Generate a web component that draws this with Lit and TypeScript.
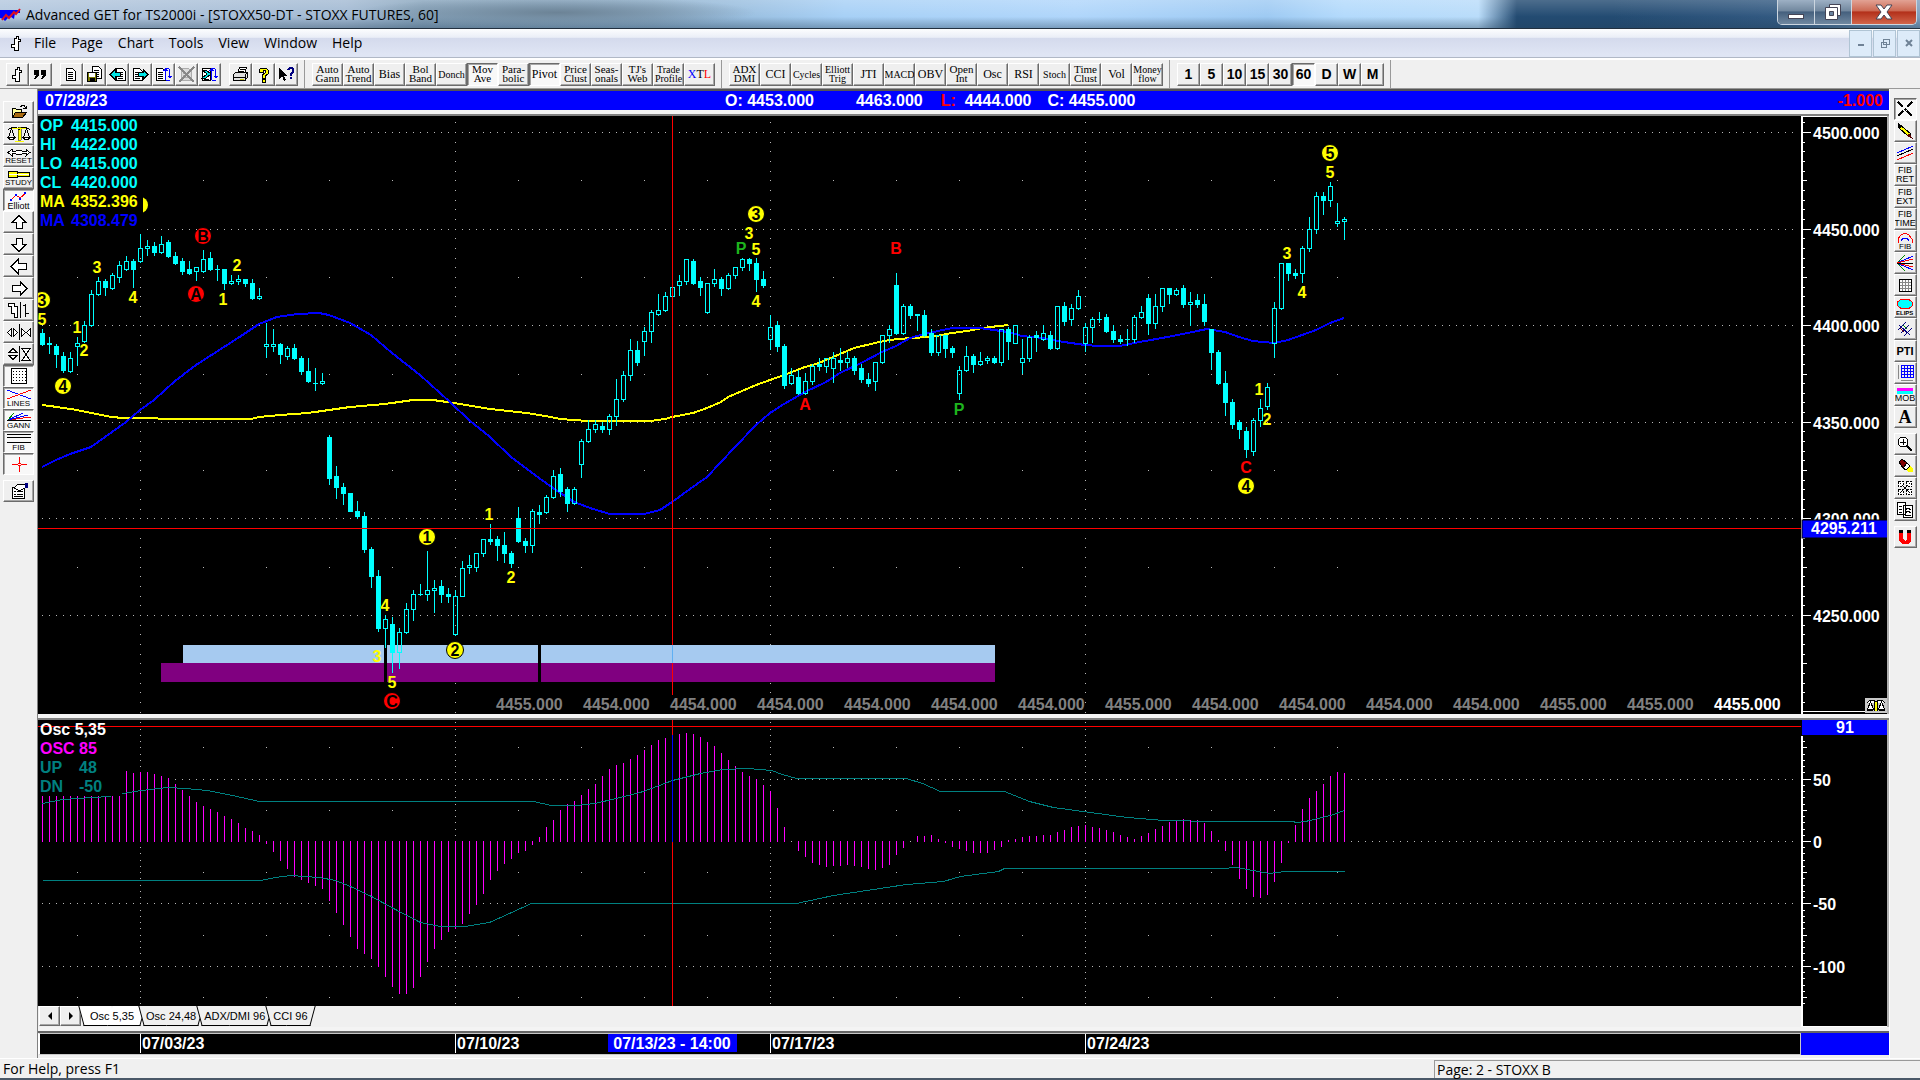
import { LitElement, html, svg, css } from "lit";
import { customElement, state } from "lit/decorators.js";

/* ------------------------------------------------------------------ data */

const FIRST_BAR_X = 42;
const BAR_STEP = 7;
const BAR_COUNT = 187;
const barX = (i: number) => FIRST_BAR_X + BAR_STEP * i;

/* high, body top, body bottom, low on the window canvas; f = filled, h = hollow */
const CANDLES = `
329 333 345 346 f,337 343 345 354 f,344 346 355 368 f,352 356 371 373 f,352 358 372 373 h,337 343 347 366 h,321 325 342 343 h,290 294 326 327 h,
277 281 295 296 h,279 281 288 296 f,273 275 289 290 h,261 265 278 283 h,256 261 270 271 h,259 261 270 288 f,234 248 262 263 h,240 246 249 256 h,
242 246 253 256 f,236 244 253 254 h,240 242 257 258 f,252 256 264 265 f,258 261 272 275 f,261 269 274 275 f,267 267 272 281 h,250 259 272 273 h,
252 258 270 271 f,265 269 270 281 f,269 269 284 290 f,275 281 284 285 h,275 279 282 285 h,279 279 284 287 f,279 283 299 300 f,288 296 299 300 h,
323 344 347 358 h,329 344 347 352 h,343 344 355 364 f,346 348 357 360 h,344 348 359 360 f,356 358 372 375 f,358 371 382 383 f,368 383 384 391 f,
373 381 384 385 h,435 437 479 485 f,466 476 488 499 f,483 487 494 505 f,493 493 512 512 f,501 511 517 519 f,512 516 550 553 f,547 549 577 588 f,
570 576 629 632 f,615 619 629 648 h,617 624 653 673 f,628 632 653 669 h,603 609 633 634 h,590 594 610 621 h,584 594 595 596 f,551 590 595 601 h,
580 588 591 613 h,580 586 595 603 f,588 594 597 603 f,590 596 635 636 h,561 568 597 597 h,555 565 568 574 h,553 553 568 572 h,539 539 554 557 h,
524 539 542 545 f,536 539 546 561 f,532 545 554 563 f,551 553 564 568 f,507 518 542 543 f,538 541 546 553 f,509 511 546 553 h,505 512 515 524 f,
495 497 513 514 h,470 476 498 499 h,468 474 492 497 f,487 489 504 512 f,487 489 504 505 h,439 441 465 478 h,420 429 442 443 h,420 424 430 433 h,
422 426 430 433 f,414 416 430 435 h,379 399 417 426 h,371 375 400 402 h,339 350 376 381 h,341 350 363 366 f,327 331 342 356 h,310 312 332 343 h,
294 310 315 316 h,292 296 311 312 h,283 287 297 298 h,275 281 286 296 h,259 259 282 285 h,259 261 284 285 f,277 281 288 296 f,283 283 313 314 h,
269 279 284 287 h,277 279 289 296 f,273 275 289 290 h,267 267 276 279 h,258 259 268 271 h,258 259 264 271 f,258 263 280 292 f,271 279 286 288 f,
315 327 340 350 h,321 325 347 352 f,344 346 386 389 f,368 375 384 385 h,370 377 394 395 f,373 381 394 395 h,364 366 382 385 h,358 364 367 371 f,
358 358 367 373 h,352 358 369 383 h,348 360 363 371 f,352 358 363 368 h,356 358 371 375 f,364 368 380 383 f,373 379 384 387 f,362 362 382 391 h,
335 335 363 364 h,325 329 336 343 h,273 285 334 335 f,304 306 334 335 h,304 306 316 319 f,314 314 316 331 f,310 315 336 337 f,329 333 353 356 f,
335 335 353 356 h,335 335 349 358 f,346 348 353 358 f,366 370 394 400 h,346 356 371 372 h,354 356 365 373 f,352 361 365 366 h,356 358 361 364 h,
356 358 363 364 f,329 329 363 366 h,327 329 342 360 f,325 325 344 344 h,339 358 363 374 h,335 337 359 362 h,331 335 338 352 f,325 333 340 341 h,
331 335 349 350 f,306 306 349 350 h,302 306 322 326 f,304 308 320 326 h,290 296 309 310 h,323 327 344 352 h,317 319 328 343 h,312 319 320 323 f,
314 317 332 333 f,325 331 340 343 f,335 339 342 344 f,329 339 340 346 f,315 317 340 343 h,306 312 318 319 h,294 298 324 335 f,294 306 324 329 h,
288 288 307 312 h,288 288 295 304 f,288 290 295 296 h,285 288 305 308 f,292 302 305 326 h,294 300 305 308 f,294 304 322 326 f,329 329 353 370 f,
350 352 384 385 f,371 383 403 416 f,399 402 425 429 f,420 422 430 439 f,427 431 450 458 f,418 420 452 456 h,399 408 421 427 h,383 387 407 410 h,
302 308 344 358 h,263 263 309 310 h,263 263 274 281 f,269 273 276 279 f,246 248 274 283 h,217 229 249 252 h,192 196 230 234 h,192 196 201 215 f,
182 186 201 207 h,203 221 224 227 h,217 219 222 240 h`
  .split(",")
  .map((row) => {
    const p = row.trim().split(" ");
    return { high: +p[0], top: +p[1], bottom: +p[2], low: +p[3], filled: p[4] === "f" };
  });

const MA_SLOW =
  "42,405 50,406 77,410 91,413 112,417 123,418 140,418 175,419 251,419 259,417 280,415 308,413 329,410 350,407 385,404 413,400 433,400 454,403 490,409 527,413 551,417 560,419 588,421 650,421 665,419 672,417 693,413 707,408 721,402 728,397 742,391 756,385 770,380 784,375 805,367 819,363 840,354 854,348 875,343 889,340 910,338 931,337 952,333 967,331 983,328 1008,325";
const MA_FAST =
  "42,467 56,460 70,454 91,447 112,432 126,422 140,410 154,400 175,381 196,365 224,347 238,338 259,324 277,317 297,314 319,313 329,315 350,323 371,335 392,353 420,375 450,402 469,420 490,437 511,457 539,478 553,488 574,502 593,509 610,514 644,514 660,510 672,502 690,489 707,477 721,462 735,447 756,425 770,413 784,404 805,392 826,382 840,373 861,363 882,352 896,346 910,338 924,334 938,331 952,328 980,328 987,329 1008,332 1022,336 1043,338 1064,342 1085,345 1099,346 1120,346 1134,343 1162,338 1183,334 1197,331 1207,329 1225,332 1239,337 1253,341 1274,343 1288,340 1302,335 1316,330 1330,323 1344,318";

const OSC_UP =
  "42,803 62,799 108,796 123,793 141,790 167,787 185,788 207,790 232,795 259,801 533,801 551,805 576,805 594,803 616,798 643,791 672,780 700,773 722,769 747,768 771,770 782,774 796,778 906,778 922,783 940,791 1004,791 1029,801 1053,807 1090,812 1127,817 1163,820 1216,821 1292,821 1296,822 1305,821 1330,815 1344,810";
const OSC_DOWN =
  "42,880 260,880 275,877 290,875 319,877 335,880 350,886 371,896 393,908 420,922 440,926 464,926 489,922 531,903 796,903 833,895 906,884 943,881 960,876 998,871 1004,868 1222,868 1236,867 1269,873 1285,871 1344,871";

/* ends of the oscillator bars, one entry for each bar */
const OSC_HEAD = [
  796, 796, 796, 796, 796, 796, 796, 796, 796, 796, 796, 796, 771, 773, 772, 772, 774, 776, 778, 784, 790, 796, 802, 806,
  809, 812, 816, 819, 823, 828, 831, 835, 844, 852, 861, 869, 877, 880, 883, 886, 889, 901, 913, 925, 937, 949, 954, 959,
  967, 977, 987, 994, 994, 988, 977, 962, 949, 940, 932, 929, 924, 914, 905, 894, 880, 871, 864, 859, 853, 851, 845, 837,
  827, 820, 810, 804, 801, 795, 789, 784, 776, 769, 765, 763, 759, 755, 750, 745, 740, 738, 735, 734, 733, 734,
];
const OSC_MIDDLE: [number, number][] = [
  [94, 737], [96, 746], [98, 760], [100, 772], [102, 779], [104, 791], [105, 808], [106, 827], [107, 841], [108, 851],
  [110, 863], [112, 867], [115, 865], [117, 867], [119, 870], [121, 865], [122, 855], [123, 848], [124, 841], [125, 836],
  [127, 835], [128, 839], [130, 847], [133, 853], [135, 853], [137, 847], [138, 840], [141, 836], [144, 835], [147, 827],
  [149, 825], [152, 830], [156, 839], [158, 833], [161, 822], [163, 819], [165, 820], [166, 823],
];
const OSC_TAIL = [831, 840, 851, 865, 879, 889, 897, 898, 895, 882, 863, 843, 825, 809, 798, 791, 784, 776, 772, 773];

type Mark = [text: string, x: number, y: number, color: string, ring?: boolean];
const YELLOW = "#ffff00";
const RED = "#ff0000";
const GREEN = "#1eb41e";
const MARKS: Mark[] = [
  ["3", 42, 300, YELLOW, true], ["5", 42, 319, YELLOW], ["3", 97, 267, YELLOW], ["4", 133, 297, YELLOW],
  ["1", 77, 327, YELLOW], ["2", 84, 350, YELLOW], ["4", 63, 386, YELLOW, true], ["B", 203, 236, RED, true],
  ["A", 196, 294, RED, true], ["1", 223, 299, YELLOW], ["2", 237, 265, YELLOW], ["4", 385, 605, YELLOW],
  ["3", 377, 656, YELLOW], ["5", 392, 682, YELLOW], ["C", 392, 701, RED, true], ["1", 427, 537, YELLOW, true],
  ["2", 455, 650, YELLOW, true], ["1", 489, 514, YELLOW], ["2", 511, 577, YELLOW], ["3", 756, 214, YELLOW, true],
  ["3", 749, 233, YELLOW], ["P", 741, 248, GREEN], ["5", 756, 249, YELLOW], ["4", 756, 301, YELLOW],
  ["A", 805, 404, RED], ["B", 896, 248, RED], ["P", 959, 409, GREEN], ["C", 1246, 467, RED],
  ["4", 1246, 486, YELLOW, true], ["1", 1259, 389, YELLOW], ["2", 1267, 419, YELLOW], ["3", 1287, 253, YELLOW],
  ["4", 1302, 292, YELLOW], ["5", 1330, 172, YELLOW], ["5", 1330, 153, YELLOW, true],
];

const QUOTES = ["4455", "4454", "4454", "4454", "4454", "4454", "4454", "4455", "4454", "4454", "4454", "4454", "4455", "4455", "4455"];

const WEEK_X = [140, 455, 770, 1085];
const priceY = (p: number) => Math.round(132 + (4500 - p) * 1.932);
const oscY = (v: number) => Math.round(841 - v * 1.248);

function oscEnds(): number[] {
  const out = [...OSC_HEAD];
  for (let i = OSC_HEAD.length; i <= 166; i++) {
    const k = OSC_MIDDLE.findIndex(([b]) => b >= i);
    const [b1, y1] = OSC_MIDDLE[k];
    const [b0, y0] = OSC_MIDDLE[Math.max(0, k - 1)];
    out.push(b1 === b0 ? y1 : Math.round(y0 + ((y1 - y0) * (i - b0)) / (b1 - b0)));
  }
  return out.concat(OSC_TAIL).slice(0, BAR_COUNT);
}

/* one-pixel dots: full rows, week columns, and sparse dots on the half rows */
function gridDots(rows: number[], halfRows: number[], columnYs: number[]): string {
  let d = "";
  for (const y of rows) for (let x = 42; x < 1798; x += BAR_STEP) d += `M${x} ${y}h1v1h-1z`;
  for (const y of halfRows) for (let x = 77; x <= 1337; x += 63) d += `M${x} ${y}h1v1h-1z`;
  for (const x of WEEK_X) for (const y of columnYs) d += `M${x} ${y}h1v1h-1z`;
  return d;
}

const range = (from: number, to: number, step: number) => {
  const out: number[] = [];
  for (let v = from; step > 0 ? v <= to : v >= to; v += step) out.push(v);
  return out;
};

/* ----------------------------------------------------------------- icons */

const icon = (w: number, h: number, body: unknown) =>
  html`<svg class="ic" width=${w} height=${h} viewBox="0 0 ${w} ${h}" aria-hidden="true">${body}</svg>`;

const hookPath = svg`<path d="M8.500 1.500h2v3h2v2h-2v9h-4v-3h-3v-3h3v-6h2z" fill="#fff" stroke="#000"/>`;
const sheet = (x: number, y = 2) => svg`
  <path d="M${x}.5 ${y}.5h6l3 3v9h-9z" fill="#fff" stroke="#000"/>
  <path d="M${x + 2} ${y + 4}.5h5M${x + 2} ${y + 6}.5h5M${x + 2} ${y + 8}.5h5M${x + 2} ${y + 10}.5h5" stroke="#000"/>`;
const loopArrow = svg`<path d="M10 2.500h4M14.500 3v9M10.500 4v10M11 14.500h4" fill="none" stroke="#00f"/><path d="M12 10h5l-2 3zM8 5h5l-2-4z" fill="#00f"/>`;

const ICONS = {
  hook: icon(17, 17, hookPath),
  quote: icon(17, 17, svg`<path d="M2 4h5v5l-3 4h-2l2-4h-2zM9 4h5v5l-3 4h-2l2-4h-2z" fill="#000"/>`),
  page: icon(17, 17, sheet(3)),
  saveAs: icon(17, 17, svg`${sheet(6, 0)}<path d="M1.500 6.500h9v9h-9z" fill="#7a7a00" stroke="#000"/><path d="M3 7h6v4h-6z" fill="#fff"/><path d="M4 12h5v3h-5z" fill="#000"/>`),
  back: icon(17, 17, svg`${sheet(7)}<path d="M1 8.500l5-5v3h5v4h-5v3z" fill="#00e5e5" stroke="#000"/>`),
  next: icon(17, 17, svg`${sheet(1)}<path d="M16 8.500l-5-5v3h-5v4h5v3z" fill="#00e5e5" stroke="#000"/>`),
  pageLoop: icon(17, 17, svg`${sheet(1)}${loopArrow}`),
  pageOff: icon(17, 17, svg`<g opacity=".55"><path d="M3.500 2.500h7l3 3v9h-10z" fill="#ccc" stroke="#777"/><path d="M5 7.500h6M5 9.500h6M5 11.500h6" stroke="#777"/></g><path d="M1 1l15 15M16 1L1 16" stroke="#888" stroke-width="2"/>`),
  pagesLoop: icon(17, 17, svg`<path d="M1.500 2.500h8v12h-8z" fill="#fff" stroke="#000"/><path d="M1 4l5 4-5 4h4l5-4-5-4z" fill="#00e5e5" stroke="#000"/><path d="M3 13.500h5" stroke="#000"/>${loopArrow}`),
  print: icon(17, 17, svg`<path d="M5.500 7.500l2-6h7l-2 6z" fill="#fff" stroke="#000"/><path d="M8 3.500h5M7 5.500h5" stroke="#000"/><path d="M1.500 8.500l2-2h12l-2 2v6h-12zM13.500 14l2-3v-4" fill="#ddd" stroke="#000"/><path d="M2 11.500h11" stroke="#000"/><path d="M8 13h4v1h-4z" fill="#cc0"/>`),
  help: icon(17, 17, svg`<path d="M4 6v-2l2-2h5l2 2v4l-3 2v2h-3v-3l3-2v-3h-2v2zM7 13h3v3h-3z" fill="#ff0" stroke="#000"/>`),
  whatsThis: icon(17, 17, svg`<path d="M1 2v11l3-3 2 5 2-1-2-4h4z" fill="#000"/><path d="M9 4v-1l2-2h3l2 2v3l-2 2v2h-2v-3l2-2v-2h-2v1zM12 11h2v2h-2z" fill="#000080"/>`),
  open: icon(26, 18, svg`<path d="M6.500 14.500v-9h3l1 1h5v3" fill="#ffff9c" stroke="#000"/><path d="M6.500 14.500l3-5h11l-4 5z" fill="#a86a10" stroke="#000"/><path d="M14 3.500h1l1-1h2l2 3M17 5.500h3v-3" fill="none" stroke="#000"/>`),
  scales: icon(26, 18, svg`<path d="M12 2h3v13h-3z" fill="#ff0" stroke="#000" stroke-width=".5"/><path d="M2 4.500l4-2h4l3 2 3-2h4l4 2M5.500 4l-3 8h6zM20.500 4l-3 8h6z" fill="none" stroke="#000"/><path d="M2 12.500h7l-2 2h-3zM17 12.500h7l-2 2h-3z" fill="#fff" stroke="#000"/><path d="M9 16h9" stroke="#ff0"/><path d="M6 3.500h14" stroke="#ff0"/>`),
  reset: icon(26, 9, svg`<path d="M2 4.500l4-3v2h3l2-1h4l2 1h3v-2l4 3-4 3v-2h-3l-2 1h-4l-2-1h-3v2z" fill="#fff" stroke="#000"/>`),
  study: icon(26, 9, svg`<path d="M2.500 1.500h9v6h-9zM11.500 2.500h12v4h-12z" fill="#ff0" stroke="#000"/><path d="M3 4.500h20" stroke="#fff"/>`),
  zigzag: icon(26, 11, svg`<path d="M5 9l5-5 4 3 6-5" fill="none" stroke="#f00"/><path d="M9 3h2v2h-2zM13 7h2v2h-2zM18 1h2v2h-2zM4 8h2v2h-2z" fill="#00f"/>`),
  up: icon(26, 18, svg`<path d="M13 2.500l7 7h-4v6h-6v-6h-4z" fill="#fff" stroke="#000"/>`),
  down: icon(26, 18, svg`<path d="M13 16.500l7-7h-4v-6h-6v6h-4z" fill="#fff" stroke="#000"/>`),
  left: icon(26, 18, svg`<path d="M5 9.500l7-7v4h8v6h-8v4z" fill="#fff" stroke="#000"/>`),
  right: icon(26, 18, svg`<path d="M21 9.500l-7-7v4h-8v6h8v4z" fill="#fff" stroke="#000"/>`),
  bars: icon(26, 18, svg`<path d="M2.500 2.500h6v3h3v11h-3v-4h-3v-7h-3z" fill="#fff" stroke="#000"/><path d="M14.500 1v16M19.500 3v13M17 4.500h3M19 12.500h4" stroke="#000"/>`),
  widthAdj: icon(26, 18, svg`<path d="M5.500 5.500v8l-4-4zM7.500 5.500v8l4-4zM15.500 5.500v8l4-4zM24.500 5.500v8l-4-4z" fill="#fff" stroke="#000"/><path d="M13.500 1v16" stroke="#000"/>`),
  heightAdj: icon(26, 18, svg`<path d="M3 7.500h8l-4-4zM3 10.500h8l-4 4zM16 3.500h8l-4 6zM16 15.500h8l-4-6z" fill="#fff" stroke="#000"/><path d="M13.500 1v16" stroke="#000"/>`),
  grid: icon(26, 18, svg`<path d="M5.500 1.500h15v15h-15z" fill="#fff" stroke="#000"/><path d="M7 4.500h13M7 7.500h13M7 10.500h13M7 13.500h13" stroke="#000" stroke-dasharray="1 2"/>`),
  lines: icon(26, 11, svg`<path d="M1 1l24 9" stroke="#00f"/><path d="M1 10L25 1" stroke="#f00"/>`),
  gann: icon(26, 11, svg`<path d="M2 9L25 6" stroke="#f00"/><path d="M2 9L17 2M2 9l20-5" stroke="#00f"/><path d="M2 9l6-7" stroke="#080"/><path d="M1 9.500h24" stroke="#000"/>`),
  fib: icon(26, 11, svg`<path d="M1 1.500h24M1 4.500h24M1 9.500h24" stroke="#000"/>`),
  cross: icon(26, 18, svg`<path d="M6 9h6v1h-6zM15 9h6v1h-6zM13 2h1v6h-1zM13 11h1v6h-1zM12 8h3v1h-3zM12 10h3v1h-3z" fill="#f00"/>`),
  props: icon(26, 18, svg`<path d="M6.500 5.500h12v11h-12z" fill="#fff" stroke="#000"/><path d="M8 9.500h2M11 9.500h6M8 12.500h2M11 12.500h6M8 14.500h9" stroke="#000"/><path d="M8 6l4-4h7v4l-4 2h-3z" fill="#fff" stroke="#000"/><path d="M19 1h3v5h-3z" fill="#000080"/>`),
  pointer: icon(18, 18, svg`<path d="M2 2l5 5M16 2l-5 5M2 16l5-5M16 16l-5-5" stroke="#000" stroke-width="2"/><path d="M8 9h3M9 8v3" stroke="#000"/>`),
  pencil: icon(18, 18, svg`<path d="M3 2l12 10-2 3L2 5z" fill="#ff0" stroke="#000"/><path d="M2 1l4 3-3 3z" fill="#000"/><path d="M13 11l4 6-6-3z" fill="#500"/>`),
  parallels: icon(18, 18, svg`<path d="M1 9L17 2" stroke="#00f"/><path d="M1 12L17 5" stroke="#000"/><path d="M1 16L17 9" stroke="#f00"/>`),
  arc: icon(18, 18, svg`<path d="M2 11v-4l3-4 4-2 4 2 3 4v4" fill="none" stroke="#f00"/><path d="M5 9l2-3h4l2 3" fill="none" stroke="#00f"/><text class="tiny" x="3" y="17">FIB</text>`),
  fan: icon(18, 18, svg`<path d="M1 9L9 1M1 9l8 8" stroke="#080"/><path d="M1 9l16-7M1 9l16 7" stroke="#00f"/><path d="M1 9l16-4M1 9l16 4" stroke="#f00"/><path d="M1 9.500h16" stroke="#000"/>`),
  smallGrid: icon(18, 18, svg`<path d="M3.500 3.500h12v12h-12z" fill="#fff" stroke="#000"/><path d="M6.500 4v11M9.500 4v11M12.500 4v11M4 6.500h11M4 9.500h11M4 12.500h11" stroke="#888"/>`),
  ellipse: icon(18, 18, svg`<ellipse cx="9" cy="6" rx="8" ry="5" fill="#0ff" stroke="#f00"/><text class="micro" x="0" y="17">ELIPS</text>`),
  pitchfork: icon(18, 18, svg`<path d="M2 10l8-8M5 13l8-8M8 16l8-8M3 5l11 10" stroke="#000080"/><path d="M4 8l4 4" stroke="#800"/><path d="M7 5l4 4" stroke="#080"/>`),
  blueGrid: icon(18, 18, svg`<path d="M5.500 1.500h12v12h-12zM8.500 2v11M11.500 2v11M14.500 2v11M6 4.500h11M6 7.500h11M6 10.500h11" fill="none" stroke="#00f"/><path d="M2.500 1v14M5 16.500h12" stroke="#888"/>`),
  mob: icon(18, 6, svg`<path d="M1 0h16v3h-16z" fill="#f0f"/><path d="M1 3h16v3h-16z" fill="#0ff"/>`),
  zoom: icon(18, 18, svg`<circle cx="7" cy="7" r="5" fill="#fff" stroke="#000"/><path d="M4 7.500h6M7.500 4v6" stroke="#000"/><path d="M11 11l5 5" stroke="#000" stroke-width="2"/>`),
  eraser: icon(18, 18, svg`<path d="M3 5l3-3 5 4-4 5z" fill="#800000" stroke="#000"/><path d="M7 11l4-5 3 3-4 4z" fill="#fff" stroke="#000"/><path d="M10 13l4-4 3 2v4h-5z" fill="#ff0"/>`),
  target: icon(18, 18, svg`<path d="M2.500 2.500h5v5h-5zM10.500 2.500h5v5h-5zM2.500 10.500h5v5h-5zM10.500 10.500h5v5h-5z" fill="#fff" stroke="#000" stroke-dasharray="2 1"/><path d="M4 4l10 10M14 4L4 14" stroke="#000" stroke-dasharray="2 1"/>`),
  copies: icon(18, 18, svg`<path d="M1.500 1.500h8v12h-8zM7.500 4.500h9v12h-9z" fill="#fff" stroke="#000"/><path d="M3 5.500h3M3 8.500h3M3 11.500h3M9 8.500l3-1 3 1M9 11.500l3-1 3 1M9 14.500h6" fill="none" stroke="#000"/>`),
  magnet: icon(18, 18, svg`<path d="M3 5h4v6l2 2 2-2v-6h4v8l-3 3h-6l-3-3z" fill="#f00"/><path d="M3 2h4v3h-4zM11 2h4v3h-4z" fill="#000"/>`),
};

interface Tool {
  label: string;
  art?: unknown;
  text?: string;
  kind?: string;
  down?: boolean;
  gap?: boolean;
}

const FILE_TOOLS: Tool[] = [
  { label: "Chart", art: ICONS.hook }, { label: "Quote", art: ICONS.quote },
  { label: "New page", art: ICONS.page, gap: true }, { label: "Save page", art: ICONS.saveAs },
  { label: "Previous page", art: ICONS.back }, { label: "Next page", art: ICONS.next },
  { label: "Cycle page", art: ICONS.pageLoop }, { label: "Delete page", art: ICONS.pageOff },
  { label: "Cycle charts", art: ICONS.pagesLoop }, { label: "Print", art: ICONS.print, gap: true },
  { label: "Help", art: ICONS.help }, { label: "Context help", art: ICONS.whatsThis },
];
const CHART_TOOLS = ["Auto|Gann", "Auto|Trend", "Bias", "Bol|Band", "Donch", "Mov|Ave", "Para-|bolic", "Pivot", "Price|Clust", "Seas-|onals", "TJ's|Web", "Trade|Profile", "XTL"];
const STUDY_TOOLS = ["ADX|DMI", "CCI", "Cycles", "Elliott|Trig", "JTI", "MACD", "OBV", "Open|Int", "Osc", "RSI", "Stoch", "Time|Clust", "Vol", "Money|flow"];
const SMALL_LABELS = ["Cycles", "MACD", "Stoch", "Donch", "Elliott|Trig", "Trade|Profile", "Money|flow"];
const PERIODS = ["1", "5", "10", "15", "30", "60", "D", "W", "M"];

const LEFT_TOOLS: Tool[] = [
  { label: "Open", art: ICONS.open }, { label: "Scale", art: ICONS.scales },
  { label: "Reset", art: ICONS.reset, text: "RESET" }, { label: "Study", art: ICONS.study, text: "STUDY" },
  { label: "Elliott", art: ICONS.zigzag, text: "Elliott", kind: "wide", down: true },
  { label: "Up", art: ICONS.up }, { label: "Down", art: ICONS.down }, { label: "Left", art: ICONS.left },
  { label: "Right", art: ICONS.right }, { label: "Bar style", art: ICONS.bars }, { label: "Bar width", art: ICONS.widthAdj },
  { label: "Bar height", art: ICONS.heightAdj }, { label: "Grid", art: ICONS.grid, down: true },
  { label: "Lines", art: ICONS.lines, text: "LINES", down: true }, { label: "Gann", art: ICONS.gann, text: "GANN", down: true },
  { label: "Fib", art: ICONS.fib, text: "FIB", down: true }, { label: "Crosshair", art: ICONS.cross, down: true },
  { label: "Properties", art: ICONS.props, gap: true },
];
const RIGHT_TOOLS: Tool[] = [
  { label: "Pointer", art: ICONS.pointer, down: true }, { label: "Draw line", art: ICONS.pencil },
  { label: "Parallel lines", art: ICONS.parallels }, { label: "Fib retracement", text: "FIB|RET", kind: "pair" },
  { label: "Fib extension", text: "FIB|EXT", kind: "pair" }, { label: "Fib time", text: "FIB|TIME", kind: "pair" },
  { label: "Fib arc", art: ICONS.arc }, { label: "Gann fan", art: ICONS.fan }, { label: "Gann box", art: ICONS.smallGrid },
  { label: "Ellipse", art: ICONS.ellipse }, { label: "Regression", art: ICONS.pitchfork },
  { label: "PTI", text: "PTI", kind: "heavy" }, { label: "Price grid", art: ICONS.blueGrid },
  { label: "MOB", art: ICONS.mob, text: "MOB", kind: "pair" }, { label: "Text", text: "A", kind: "letter" },
  { label: "Zoom", art: ICONS.zoom, gap: true }, { label: "Erase", art: ICONS.eraser },
  { label: "Target", art: ICONS.target }, { label: "Copy", art: ICONS.copies },
  { label: "Magnet", art: ICONS.magnet, gap: true },
];

/* ------------------------------------------------------------- component */

@customElement("app-root")
export class AppRoot extends LitElement {
  @state() private period = "60";
  @state() private tab = 0;
  @state() private pressed = new Set(["Mov|Ave", "Pivot"]);

  static styles = css`
    :host {
      display: flex;
      flex-direction: column;
      min-height: 100vh;
      background: #f0f0f0;
      color: #000;
      font-family: "Open Sans", "Noto Sans", sans-serif;
      font-size: 14px;
      overflow: hidden;
    }
    * { box-sizing: border-box; }
    button { font: inherit; color: inherit; margin: 0; padding: 0; border: 0; }
    .ic { display: block; shape-rendering: crispEdges; }
    .title {
      display: flex;
      align-items: flex-start;
      height: 29px;
      border-bottom: 1px solid #22303f;
      background:
        radial-gradient(ellipse 200px 16px at 29% 45%, #6c8396 0%, #6c839600 100%),
        linear-gradient(180deg, #ffffff30, #ffffff00 60%, #22405a60),
        linear-gradient(90deg, #b4c8df 0%, #a3bad3 18%, #88a5bd 22%, #8fb0cc 34%, #a7d0f6 44%, #b0d6fb 56%, #9ecaf3 66%, #b3dafc 70%, #b9dcfa 77%, #234b72 79%, #234b72 84%, #335a82 93%, #7fa0bf 100%);
    }
    .title .logo { margin: 8px 5px 0 0; }
    .title h1 { flex: 1; margin: 0; font-size: 14px; line-height: 29px; font-weight: 400; }
    .winctl { display: flex; margin-right: 3px; height: 25px; border: 1px solid #ccd6e0; border-top: 0; border-radius: 0 0 5px 5px; overflow: hidden; }
    .winctl button { display: grid; place-items: center; width: 37px; border-right: 1px solid #ccd6e0; background: linear-gradient(#9db0c4, #72889f 45%, #45607e 50%, #7088a0); }
    .winctl .close { width: 64px; border: 0; background: linear-gradient(#e2a294, #cc6a54 45%, #b3301a 50%, #d2654a); }
    .menu {
      display: flex;
      align-items: center;
      height: 29px;
      padding-left: 8px;
      border-bottom: 1px solid #b0b8c6;
      background: linear-gradient(#fcfdfe, #eaeef7 30%, #d4daec 32%, #dfe5f4 90%);
    }
    .menu nav { display: flex; flex: 1; gap: 15px; padding-left: 9px; }
    .menu nav button { background: none; line-height: 20px; }
    .mdi { display: flex; gap: 1px; }
    .mdi button { display: grid; place-items: center; width: 23px; height: 27px; border: 1px solid #b0c4d4; background: #ddebf9; }
    .toolbar { display: flex; align-items: center; height: 31px; border-top: 2px solid #fff; border-bottom: 1px solid #999; padding-left: 6px; }
    .group { display: flex; padding-right: 6px; margin-right: 7px; height: 28px; align-items: center; border-right: 1px solid #999; }
    .tool {
      display: flex;
      flex-direction: column;
      align-items: center;
      justify-content: center;
      width: 23px;
      height: 23px;
      background: #efefef;
      border: 1px solid;
      border-color: #fff #6b6b6b #6b6b6b #fff;
      box-shadow: inset -1px -1px 0 #a6a6a6;
      overflow: hidden;
    }
    .tool.down { border-color: #6b6b6b #fff #fff #6b6b6b; background: #f8f8f8; box-shadow: inset 1px 1px 0 #a6a6a6; }
    .tool.gap { margin-left: 8px; }
    .study { width: 31px; font-family: "Liberation Serif", serif; font-size: 11px; line-height: 9px; }
    .study.one { font-size: 12px; }
    .study.small { font-size: 10px; }
    .study span, .side span { display: block; white-space: nowrap; }
    .period { font-family: "Liberation Sans", sans-serif; font-size: 14px; font-weight: 700; }
    .blue { color: #00f; }
    .red { color: #f00; }
    .inline { display: inline !important; }
    .body { display: flex; flex: 1; align-items: stretch; }
    .side { display: flex; flex-direction: column; align-items: center; font-family: "Liberation Sans", sans-serif; }
    .side.west { width: 38px; padding-top: 12px; border-right: 1px solid #808080; }
    .side.east { width: 31px; padding-top: 9px; border-left: 1px solid #fff; }
    .side .tool { width: 31px; height: 22px; margin: 0; font-size: 8px; line-height: 8px; flex: none; }
    .side.east .tool { width: 23px; }
    .side .tool.gap { margin: 5px 0 0; }
    .side .tool.wide { font-size: 9px; }
    .side .tool.pair { font-size: 9px; line-height: 9px; }
    .side .tool.heavy { font-size: 11px; font-weight: 900; }
    .side .tool.letter { font: 700 18px/18px "Liberation Serif", serif; }
    .tiny { font: 8px "Liberation Sans", sans-serif; }
    .micro { font: 700 6px "Liberation Sans", sans-serif; }
    .desk { flex: 1; min-width: 0; display: flex; flex-direction: column; font-family: "Liberation Sans", sans-serif; }
    .quote { display: flex; align-items: center; height: 21px; border-top: 2px solid #555; background: #00f; color: #fff; font-size: 16px; font-weight: 700; padding: 0 6px 0 7px; white-space: pre; }
    .quote .date { flex: 0 0 680px; }
    .quote .high { margin-left: 42px; }
    .quote .low { margin: 0 16px 0 18px; }
    .quote .change { margin-left: auto; }
    .pane { display: flex; background: #000; border-top: 2px solid #808080; }
    .edge { height: 4px; flex: none; background: #f4f4f4; }
    .plot { flex: 1; min-width: 0; }
    .plot svg, .axis svg { display: block; width: 100%; }
    .axis { flex: 0 0 88px; background: #000; border-right: 2px solid #b0b0b0; }
    .plot, .axis { overflow: hidden; }
    .crisp { shape-rendering: crispEdges; }
    .t { font: 700 16px "Liberation Sans", sans-serif; }
    .mid { text-anchor: middle; }
    .tabs { display: flex; height: 21px; padding: 0 0 0 1px; background: #f0f0f0; font-size: 11px; }
    .tabs .step { width: 21px; height: 20px; display: grid; place-items: center; background: #efefef; border: 1px solid; border-color: #fff #6b6b6b #6b6b6b #fff; box-shadow: inset -1px -1px 0 #a6a6a6; }
    .tabs .step svg { width: 8px; }
    .tabs [role="tablist"] { display: flex; }
    .tab { position: relative; z-index: 0; height: 20px; padding: 0 5px; margin-right: -2px; background: none; line-height: 16px; white-space: nowrap; }
    .tab::before, .tab::after { content: ""; position: absolute; z-index: -1; top: 0; bottom: 0; width: 52%; background: #f0f0f0; border-bottom: 1px solid #000; }
    .tab::before { left: 0; border-left: 1px solid #000; transform: skewX(15deg); }
    .tab::after { right: 0; border-right: 1px solid #000; transform: skewX(-15deg); }
    .tab.on { padding: 0 9px; }
    .tab.on::before, .tab.on::after { background: #fff; }
    .time { display: flex; height: 24px; border-top: 2px solid #666; background: #000; }
    .time .plot { border: 1px solid #c8c8c8; border-left: 2px solid #fff; }
    .time .corner { flex: 0 0 88px; background: #00f; }
    .status { display: flex; height: 22px; border-top: 1px solid #fff; border-bottom: 2px solid #4a5868; line-height: 20px; padding-left: 3px; }
    .status .help { flex: 1; }
    .status .page { width: 486px; border: 1px solid #999; border-width: 1px 0 0 1px; padding-left: 2px; margin-top: 1px; line-height: 18px; }
  `;

  private toggle(name: string) {
    const next = new Set(this.pressed);
    if (!next.delete(name)) next.add(name);
    this.pressed = next;
  }

  private tool(t: Tool) {
    return html`<button class="tool ${t.kind ?? ""} ${t.down ? "down" : ""} ${t.gap ? "gap" : ""}" aria-label=${t.label}>
      ${t.art ?? ""}${(t.text ?? "").split("|").filter(Boolean).map((s) => html`<span>${s}</span>`)}
    </button>`;
  }

  private study(name: string) {
    const parts = name.split("|");
    const size = SMALL_LABELS.includes(name) ? "small" : parts.length === 1 ? "one" : "";
    return html`<button class="tool study ${size} ${this.pressed.has(name) ? "down" : ""}" @click=${() => this.toggle(name)}>
      ${name === "XTL"
        ? html`<span><span class="blue inline">X</span>T<span class="red inline">L</span></span>`
        : parts.map((p) => html`<span>${p}</span>`)}
    </button>`;
  }

  private mark([text, x, y, color, ring]: Mark) {
    return ring
      ? svg`<circle cx=${x} cy=${y} r="8.500" fill=${color} stroke="#000"/><text class="t mid" x=${x} y=${y + 6} fill="#000">${text}</text>`
      : svg`<text class="t mid" x=${x} y=${y + 6} fill=${color}>${text}</text>`;
  }

  private candles() {
    let wicks = "";
    let solid = "";
    let open = "";
    CANDLES.forEach((c, i) => {
      const x = barX(i);
      wicks += `M${x} ${c.high}h1V${c.top}h-1zM${x} ${c.bottom}h1V${c.low}h-1z`;
      if (c.filled) solid += `M${x - 2} ${c.top}h5V${c.bottom}h-5z`;
      else open += `M${x - 1.5} ${c.top + 0.5}h4V${c.bottom - 0.5}h-4z`;
    });
    return svg`<path d=${wicks + solid} fill="#0ff"/><path d=${open} fill="none" stroke="#0ff"/>`;
  }

  private pricePlot() {
    const rows = range(4500, 4250, -50).map(priceY);
    const half = range(4475, 4275, -50).map(priceY);
    const column = range(4505, 4195, -5).map(priceY);
    const readout: [string, string, string][] = [
      ["OP", "4415.000", "#0ff"], ["HI", "4422.000", "#0ff"], ["LO", "4415.000", "#0ff"],
      ["CL", "4420.000", "#0ff"], ["MA", "4352.396", "#ff0"], ["MA", "4308.479", "#00f"],
    ];
    return html`<svg height="598" role="img" aria-label="STOXX50 60 minute price chart">
      <g transform="translate(-38 -116)">
        <path class="crisp" d=${gridDots(rows, half, column)} fill="#b8b8b8" />
        <g class="crisp">
          <rect x="183" y="645" width="812" height="18" fill="#a6caf0" />
          <rect x="161" y="663" width="834" height="19" fill="#800080" />
          <rect x="384" y="645" width="3" height="37" />
          <rect x="538" y="645" width="3" height="37" />
          <polyline points=${MA_SLOW} fill="none" stroke="#ff0" stroke-width="2" />
          <polyline points=${MA_FAST} fill="none" stroke="#00f" stroke-width="2" />
          ${this.candles()}
        </g>
        <circle cx="140" cy="205" r="8" fill="#ff0" />
        ${MARKS.map((m) => this.mark(m))}
        ${QUOTES.map((q, k) => svg`<text class="t" x=${496 + 87 * k} y="710" fill=${k === QUOTES.length - 1 ? "#fff" : "#808080"}>${q}.000</text>`)}
        <rect x="38" y="116" width="105" height="114" />
        ${readout.map(([n, v, c], k) => svg`<text class="t" x="40" y=${131 + 19 * k} fill=${c}>${n}</text><text class="t" x="71" y=${131 + 19 * k} fill=${c}>${v}</text>`)}
        <path class="crisp" d="M38 528.500H1801M672.500 116V695" stroke="#f00" />
        <path class="crisp" d="M672.500 645V663" stroke="#5cb0f4" />
      </g>
    </svg>`;
  }

  private priceAxis() {
    return html`<svg height="598" aria-hidden="true">
      <g transform="translate(-1801 -116)">
        <path class="crisp" fill="#fff" d=${"M1801 116h2v598h-2zM1801 116h86v1h-86zM1801 711h86v1h-86z" + range(4505, 4205, -5).map((p) => `M1803 ${priceY(p)}h${p % 50 === 0 ? 8 : p % 25 === 0 ? 4 : 2}v1h-${p % 50 === 0 ? 8 : p % 25 === 0 ? 4 : 2}z`).join("")} />
        ${range(4500, 4250, -50).map((p) => svg`<text class="t" x="1813" y=${priceY(p) + 7} fill="#fff">${p}.000</text>`)}
        <rect x="1802" y="520" width="86" height="18" fill="#00f" stroke="#000" />
        <text class="t" x="1811" y="534" fill="#fff">4295.211</text>
        <g class="crisp" transform="translate(1865 698)">
          <rect width="22" height="15" fill="#c8c8c8" /><path d="M2 4.500l3-2h4l2 2 2-2h4l3 2M5.500 4l-3 7h6zM16.500 4l-3 7h6z" fill="#fff" stroke="#000" />
          <path d="M10 4h2v9h-2z" fill="#ff0" /><path d="M9.500 4v9M12.500 4v9M2 12.500h6M14 12.500h6" stroke="#000" />
        </g>
      </g>
    </svg>`;
  }

  private oscPlot() {
    const rows = [50, 0, -50, -100].map(oscY);
    const half = [75, 25, -25, -75, -125].map(oscY);
    const column = range(95, -130, -5).map(oscY);
    const bars = oscEnds().map((y, i) => (y < 841 ? `M${barX(i)} ${y}h1V842h-1z` : `M${barX(i)} 841h1V${y}h-1z`)).join("");
    const readout: [string, string][] = [["OSC", "85"], ["UP", "48"], ["DN", "-50"]];
    return html`<svg height="286" role="img" aria-label="Oscillator 5,35">
      <g transform="translate(-38 -720)">
        <g class="crisp">
          <path d=${gridDots(rows, half, column)} fill="#b8b8b8" />
          <path d=${bars} fill="#f0f" />
          <g transform="translate(.5 .5)" fill="none" stroke="#008080">
            <polyline points=${OSC_UP} />
            <polyline points=${OSC_DOWN} />
          </g>
          <rect x="38" y="720" width="84" height="76" />
        </g>
        <path class="crisp" d="M38 726.500H1801M672.500 720V735M672.500 842V1008" stroke="#f00" />
        <path class="crisp" d="M672.500 735V842" stroke="#00f" />
        <text class="t" x="40" y="735" fill="#fff">Osc 5,35</text>
        ${readout.map(([n, v], k) => svg`<text class="t" x="40" y=${754 + 19 * k} fill=${k ? "#008080" : "#f0f"}>${n}</text><text class="t" x="79" y=${754 + 19 * k} fill=${k ? "#008080" : "#f0f"}>${v}</text>`)}
      </g>
    </svg>`;
  }

  private oscAxis() {
    return html`<svg height="307" aria-hidden="true">
      <g transform="translate(-1801 -720)">
        <path class="crisp" fill="#fff" d=${"M1801 736h2v291h-2zM1801 1026h86v1h-86z" + range(80, -130, -5).map((v) => { const w = v % 50 === 0 ? 8 : v % 25 === 0 ? 4 : 2; return `M1803 ${oscY(v)}h${w}v1h-${w}z`; }).join("")} />
        ${[50, 0, -50, -100].map((v) => svg`<text class="t" x="1813" y=${oscY(v) + 7} fill="#fff">${v}</text>`)}
        <rect x="1802" y="718" width="86" height="17" fill="#00f" />
        <text class="t" x="1836" y="733" fill="#fff">91</text>
      </g>
    </svg>`;
  }

  private timeAxis() {
    return html`<svg height="20" role="img" aria-label="Time axis">
      <g transform="translate(-40 -1035)">
        ${["07/03/23", "07/10/23", "07/17/23", "07/24/23"].map((d, k) => svg`<rect x=${WEEK_X[k]} y="1035" width="1" height="19" fill="#fff"/><text class="t" x=${WEEK_X[k] + 2} y="1050" fill="#fff">${d}</text>`)}
        <rect x="608" y="1035" width="129" height="18" fill="#00f" />
        <text class="t mid" x="672" y="1050" fill="#fff">07/13/23 - 14:00</text>
      </g>
    </svg>`;
  }

  render() {
    return html`
      <header class="title">
        <svg class="logo" width="21" height="14" viewBox="0 0 21 14" aria-hidden="true">
          <path d="M0 2h20v3h-5l-1 6-3-2-3 1-3 3-2-2-3-1z" fill="#00f" /><path d="M2 12l4-5 3 3 5-6 2 2 4-5" fill="none" stroke="#e01020" stroke-width="2" />
        </svg>
        <h1>Advanced GET for TS2000i - [STOXX50-DT - STOXX FUTURES, 60]</h1>
        <div class="winctl">
          <button aria-label="Minimize window"><svg width="20" height="18" aria-hidden="true"><rect x="2.500" y="11.500" width="15" height="4" fill="#fff" stroke="#445" /></svg></button>
          <button aria-label="Restore window"><svg width="22" height="20" aria-hidden="true"><path d="M7.500 2.500h11v11h-11z" fill="#fff" stroke="#445" /><path d="M3.500 5.500h12v12h-12z" fill="#fff" stroke="#445" /><path d="M7.500 9.500h4v4h-4z" fill="#6a84a0" stroke="#445" /></svg></button>
          <button class="close" aria-label="Close window"><svg width="22" height="20" aria-hidden="true"><path d="M3 3h5l3 4 3-4h5l-5 7 5 7h-5l-3-4-3 4h-5l5-7z" fill="#fff" stroke="#445" /></svg></button>
        </div>
      </header>
      <div class="menu">
        ${ICONS.hook}
        <nav aria-label="Main menu">${["File", "Page", "Chart", "Tools", "View", "Window", "Help"].map((m) => html`<button>${m}</button>`)}</nav>
        <div class="mdi">
          <button aria-label="Minimize chart"><svg width="12" height="12" aria-hidden="true"><rect x="3" y="7" width="6" height="2" fill="#6f8296" /></svg></button>
          <button aria-label="Restore chart"><svg class="ic" width="12" height="12" aria-hidden="true"><path d="M4.500 2.500h6v5h-6zM2.500 5.500h5v5h-5z" fill="#ddebf9" stroke="#6f8296" /></svg></button>
          <button aria-label="Close chart"><svg width="12" height="12" aria-hidden="true"><path d="M3 3l6 6M9 3l-6 6" stroke="#6f8296" stroke-width="2" /></svg></button>
        </div>
      </div>
      <div class="toolbar">
        <div class="group">${FILE_TOOLS.map((t) => this.tool(t))}</div>
        <div class="group">${CHART_TOOLS.map((t) => this.study(t))}</div>
        <div class="group">${STUDY_TOOLS.map((t) => this.study(t))}</div>
        <div class="group">
          ${PERIODS.map((p) => html`<button class="tool period ${this.period === p ? "down" : ""}" @click=${() => (this.period = p)}>${p}</button>`)}
        </div>
      </div>
      <div class="body">
        <aside class="side west">${LEFT_TOOLS.map((t) => this.tool(t))}</aside>
        <main class="desk">
          <div class="quote">
            <span class="date">07/28/23</span><span>O: 4453.000</span><span class="high">4463.000</span>
            <span class="low"><span class="red">L:</span>  4444.000</span><span>C: 4455.000</span><span class="change red">-1.000</span>
          </div>
          <div class="edge"></div>
          <div class="pane"><div class="plot">${this.pricePlot()}</div><div class="axis">${this.priceAxis()}</div></div>
          <div class="edge"></div>
          <div class="pane">
            <div class="plot">
              ${this.oscPlot()}
              <div class="tabs">
                <button class="step" aria-label="Previous study"><svg width="8" height="10" aria-hidden="true"><path d="M6 1v8L2 5z" /></svg></button>
                <button class="step" aria-label="Next study"><svg width="8" height="10" aria-hidden="true"><path d="M2 1v8l4-4z" /></svg></button>
                <div role="tablist">
                  ${["Osc 5,35", "Osc 24,48", "ADX/DMI 96", "CCI 96"].map((t, k) => html`<button class="tab ${k === this.tab ? "on" : ""}" role="tab" aria-selected=${k === this.tab} @click=${() => (this.tab = k)}>${t}</button>`)}
                </div>
              </div>
            </div>
            <div class="axis">${this.oscAxis()}</div>
          </div>
          <div class="edge"></div>
          <div class="time"><div class="plot">${this.timeAxis()}</div><div class="corner"></div></div>
        </main>
        <aside class="side east">${RIGHT_TOOLS.map((t) => this.tool(t))}</aside>
      </div>
      <footer class="status"><span class="help">For Help, press F1</span><span class="page">Page: 2 - STOXX B</span></footer>
    `;
  }
}
